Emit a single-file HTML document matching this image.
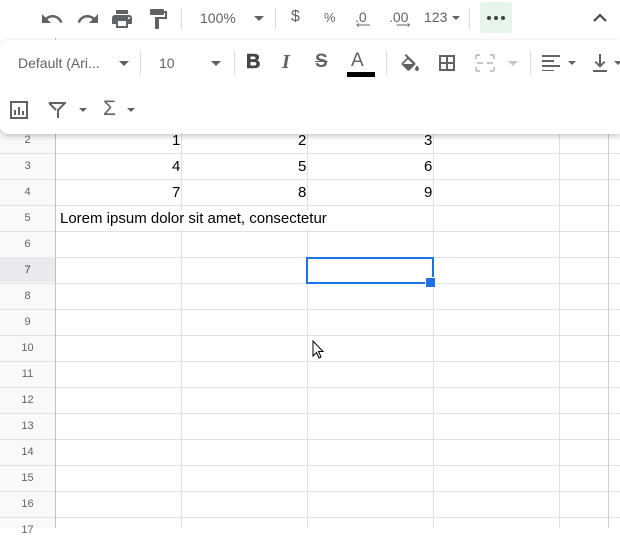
<!DOCTYPE html>
<html><head><style>
body{margin:0;width:620px;height:528px;overflow:hidden;background:#fff;font-family:"Liberation Sans",Arial,sans-serif;position:relative}
.a{position:absolute}
#grid{left:0;top:0;width:620px;height:528px;
background:
linear-gradient(90deg,transparent 55px,#c0c0c0 55px,#c0c0c0 56px,transparent 56px),
repeating-linear-gradient(180deg,transparent 0,transparent 24px,#e1e1e1 24px,#e1e1e1 25px,transparent 25px,transparent 26px) 0 129px/620px 400px no-repeat;}
.v{position:absolute;top:100px;width:1px;height:428px;background:#e1e1e1}
.rh{position:absolute;left:0;width:55px;background:#f8f9fa;}
.rn{position:absolute;left:0;width:55px;text-align:center;font-size:11px;color:#5f6368}
.c{position:absolute;font-size:15px;color:#000}
.tb{color:#5f6368}
</style></head><body>
<div class="rh a" style="top:100px;height:428px"></div>
<div id="grid" class="a"></div>
<div class="v" style="left:181px"></div>
<div class="v" style="left:307px"></div>
<div class="v" style="left:433px"></div>
<div class="v" style="left:559px"></div>
<div class="v" style="left:608px;background:#cfcfcf"></div>
<div class="rn" style="top:134px">2</div>
<div class="rn" style="top:160px">3</div>
<div class="rn" style="top:186px">4</div>
<div class="rn" style="top:212px">5</div>
<div class="rn" style="top:238px">6</div>
<div class="a" style="left:0;top:257px;width:55px;height:25px;background:#e8eaed"></div>
<div class="rn" style="top:264px;color:#3c4043">7</div>
<div class="rn" style="top:290px">8</div>
<div class="rn" style="top:316px">9</div>
<div class="rn" style="top:342px">10</div>
<div class="rn" style="top:368px">11</div>
<div class="rn" style="top:394px">12</div>
<div class="rn" style="top:420px">13</div>
<div class="rn" style="top:446px">14</div>
<div class="rn" style="top:472px">15</div>
<div class="rn" style="top:498px">16</div>
<div class="rn" style="top:524px">17</div>
<div class="c" style="left:172px;top:132px">1</div>
<div class="c" style="left:298px;top:132px">2</div>
<div class="c" style="left:424px;top:132px">3</div>
<div class="c" style="left:172px;top:158px">4</div>
<div class="c" style="left:298px;top:158px">5</div>
<div class="c" style="left:424px;top:158px">6</div>
<div class="c" style="left:172px;top:184px">7</div>
<div class="c" style="left:298px;top:184px">8</div>
<div class="c" style="left:424px;top:184px">9</div>
<div class="c" style="left:60px;top:210px;width:372px;background:#fff;height:19px">Lorem ipsum dolor sit amet, consectetur</div>
<div class="a" style="left:306px;top:257px;width:124px;height:23px;border:2px solid #1a73e8"></div>
<div class="a" style="left:426px;top:278px;width:9px;height:9px;background:#1a73e8;outline:1px solid #fff"></div>
<svg class="a" style="left:312px;top:340px" width="14" height="20"><path d="M1 1V16L4.5 12.5L7 18L9 17L6.5 11.5H11Z" fill="#fff" stroke="#000" stroke-width="1"/></svg>
<!-- top toolbar -->
<div class="a" style="left:0;top:0;width:620px;height:38px;background:#fff"></div>
<svg class="a" style="left:40px;top:7px" width="160" height="24" fill="#5f6368">
<path d="M12.5 8c-2.6 0-5 1-6.9 2.6L2 7v9h9l-3.6-3.6c1.4-1.2 3.2-1.9 5.1-1.9 3.5 0 6.5 2.3 7.600 5.5l2.4-.8C21 10.9 17.1 8 12.5 8z"/>
<path transform="translate(36,0)" d="M18.4 10.6C16.5 9 14.1 8 11.5 8 6.9 8 3 10.9 1.6 15.2l2.4.8c1-3.2 4-5.5 7.5-5.5 2 0 3.7.7 5.1 1.9L13 16h9V7z"/>
<path transform="translate(70,0)" d="M19 8H5c-1.7 0-3 1.3-3 3v6h4v4h12v-4h4v-6c0-1.7-1.3-3-3-3zm-3 11H8v-5h8v5zm3-7c-.6 0-1-.4-1-1s.4-1 1-1 1 .4 1 1-.4 1-1 1zm-1-9H6v4h12V3z"/>
<path transform="translate(106,0)" d="M18 4V3c0-.6-.4-1-1-1H5c-.6 0-1 .4-1 1v4c0 .6.4 1 1 1h12c.6 0 1-.4 1-1V6h1v4H9v11c0 .6.4 1 1 1h2c.6 0 1-.4 1-1v-9h8V4h-3z"/>
</svg>
<div class="a" style="left:181px;top:8px;width:1px;height:22px;background:#dadce0"></div>
<div class="a tb" style="left:200px;top:10px;font-size:14px">100%</div>
<div class="a" style="left:254px;top:16px;border:5px solid transparent;border-top-color:#5f6368;border-bottom:0"></div>
<div class="a" style="left:275px;top:8px;width:1px;height:22px;background:#dadce0"></div>
<div class="a tb" style="left:291px;top:8px;font-size:16px">$</div>
<div class="a tb" style="left:324px;top:10px;font-size:13px">%</div>
<div class="a tb" style="left:355px;top:9px;font-size:14px">.0</div>
<div class="a tb" style="left:356px;top:20px;font-size:10px">⟵</div>
<div class="a tb" style="left:389px;top:9px;font-size:14px">.00</div>
<div class="a tb" style="left:396px;top:20px;font-size:10px">⟶</div>
<div class="a tb" style="left:424px;top:9px;font-size:14px">123</div>
<div class="a" style="left:452px;top:16px;border:4px solid transparent;border-top-color:#5f6368;border-bottom:0"></div>
<div class="a" style="left:469px;top:8px;width:1px;height:22px;background:#dadce0"></div>
<div class="a" style="left:480px;top:2px;width:32px;height:31px;background:#e6f4ea;border-radius:3px"></div>
<div class="a" style="left:487px;top:16px;font-size:0">
<span style="display:inline-block;width:4px;height:4px;border-radius:2px;background:#3c4043;margin-right:3px"></span><span style="display:inline-block;width:4px;height:4px;border-radius:2px;background:#3c4043;margin-right:3px"></span><span style="display:inline-block;width:4px;height:4px;border-radius:2px;background:#3c4043"></span></div>
<svg class="a" style="left:592px;top:10px" width="16" height="16"><path d="M2 11L8 5L14 11" fill="none" stroke="#3c4043" stroke-width="2"/></svg>
<!-- floating panel -->
<div class="a" style="left:0;top:40px;width:620px;height:94px;background:#fff;box-shadow:0 2px 6px rgba(60,64,67,.3);border-radius:8px 0 0 8px"></div>
<div class="a tb" style="left:18px;top:55px;font-size:14px">Default (Ari...</div>
<div class="a" style="left:119px;top:61px;border:5px solid transparent;border-top-color:#5f6368;border-bottom:0"></div>
<div class="a" style="left:140px;top:51px;width:1px;height:24px;background:#dadce0"></div>
<div class="a tb" style="left:159px;top:55px;font-size:14px">10</div>
<div class="a" style="left:211px;top:61px;border:5px solid transparent;border-top-color:#5f6368;border-bottom:0"></div>
<div class="a" style="left:234px;top:51px;width:1px;height:24px;background:#dadce0"></div>
<div class="a" style="left:246px;top:51px;font-size:20px;font-weight:bold;color:#444746;-webkit-text-stroke:0.6px #444746">B</div>
<div class="a" style="left:282px;top:51px;font-size:20px;font-style:italic;font-weight:bold;color:#5f6368;font-family:'Liberation Serif',serif">I</div>
<div class="a" style="left:315px;top:51px;font-size:19px;font-weight:bold;color:#5f6368;text-decoration:line-through">S</div>
<div class="a" style="left:351px;top:50px;font-size:19px;color:#5f6368">A</div>
<div class="a" style="left:347px;top:72px;width:28px;height:5px;background:#000"></div>
<div class="a" style="left:386px;top:51px;width:1px;height:24px;background:#dadce0"></div>
<svg class="a" style="left:398px;top:52px" width="22" height="22" fill="#5f6368"><path d="M8 2l-1.4 1.4 2.4 2.4-5 5c-.6.6-.6 1.5 0 2.1l5.5 5.5c.3.3.7.4 1 .4s.8-.1 1-.4l5.5-5.5c.6-.6.6-1.5 0-2.1L8 2zm-2.8 10L10 7.2 14.8 12H5.2zM19 13.5s-2 2.2-2 3.5c0 1.1.9 2 2 2s2-.9 2-2c0-1.3-2-3.5-2-3.5z"/></svg>
<svg class="a" style="left:437px;top:53px" width="20" height="20" fill="#5f6368"><path d="M2 2v16h16V2H2zm7 14H4v-5h5v5zm0-7H4V4h5v5zm7 7h-5v-5h5v5zm0-7h-5V4h5v5z"/></svg>
<svg class="a" style="left:474px;top:54px" width="22" height="18" fill="none" stroke="#c4c7c5" stroke-width="2"><path d="M2 1v4M2 13v4M20 1v4M20 13v4M2 1h4M16 1h4M2 17h4M16 17h4M3 9h6M13 9h6"/></svg>
<div class="a" style="left:508px;top:61px;border:5px solid transparent;border-top-color:#c4c7c5;border-bottom:0"></div>
<div class="a" style="left:530px;top:51px;width:1px;height:24px;background:#dadce0"></div>
<svg class="a" style="left:542px;top:55px" width="18" height="16" fill="#5f6368"><path d="M0 0h18v2H0zM0 5h12v2H0zM0 10h18v2H0zM0 15h12v1H0z"/></svg>
<div class="a" style="left:568px;top:61px;border:4px solid transparent;border-top-color:#5f6368;border-bottom:0"></div>
<svg class="a" style="left:592px;top:53px" width="16" height="20" fill="#5f6368"><path d="M7 1h2v10l3-3 1.4 1.4L8 14.8 2.6 9.4 4 8l3 3zM1 17h14v2H1z"/></svg>
<div class="a" style="left:614px;top:61px;border:4px solid transparent;border-top-color:#5f6368;border-bottom:0"></div>
<svg class="a" style="left:9px;top:100px" width="20" height="20" fill="#5f6368"><path d="M1 1h18v18H1zM3 3v14h14V3zM5 10h2v5H5zM9 7h2v8H9zM13 11h2v4h-2z"/></svg>
<svg class="a" style="left:48px;top:101px" width="18" height="18" fill="none" stroke="#5f6368" stroke-width="2"><path d="M1 2h16L10 9v8M8 9L1 2"/></svg>
<div class="a" style="left:79px;top:108px;border:4px solid transparent;border-top-color:#5f6368;border-bottom:0"></div>
<div class="a" style="left:103px;top:97px;font-size:21px;color:#5f6368">Σ</div>
<div class="a" style="left:127px;top:108px;border:4px solid transparent;border-top-color:#5f6368;border-bottom:0"></div>
</body></html>
